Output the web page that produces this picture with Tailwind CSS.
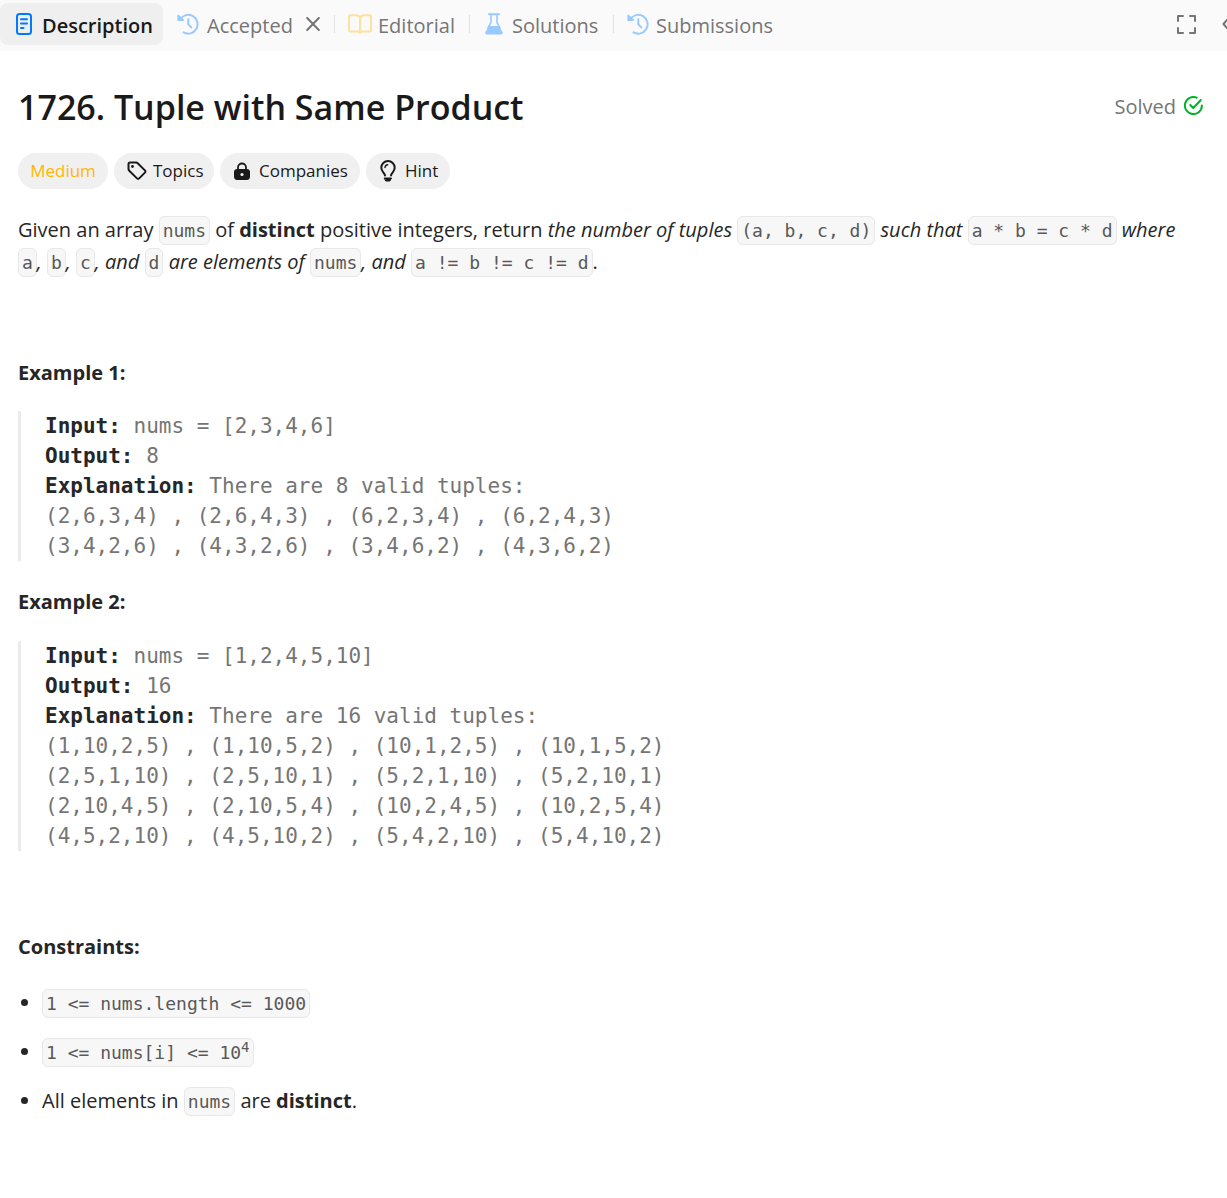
<!DOCTYPE html>
<html lang="en">
<head>
<meta charset="utf-8">
<meta name="viewport" content="width=device-width, initial-scale=1">
<title>1726. Tuple with Same Product</title>
<script src="https://cdn.jsdelivr.net/npm/@tailwindcss/browser@4"></script>
</head>
<body class="min-h-screen overflow-x-hidden bg-white font-['Open_Sans','Noto_Sans',sans-serif] text-[20px] text-[#262626]">
<header class="flex h-[51px] items-start justify-between overflow-hidden bg-[#fafafa] text-[#757575]">
  <nav aria-label="Problem tabs" class="flex h-[48px] shrink-0 items-center whitespace-nowrap [&_button>span]:pt-[3px]">
    <button type="button" class="flex h-[42px] w-[163px] items-center gap-[9px] rounded-lg bg-[#efefef] pl-[15px] font-semibold text-[#1a1a1a]">
      <svg class="h-[22px] w-[18px] shrink-0" viewBox="0 0 18 22" fill="none" stroke="#007aff" stroke-width="2" stroke-linecap="round" aria-hidden="true"><rect x="2" y="1" width="14" height="20" rx="2.5"/><path d="M6 6.3h6M6 10.6h6M6 15h2.5"/></svg>
      <span>Description</span>
    </button>
    <button type="button" class="ml-[14px] flex w-[117px] items-center gap-2">
      <svg class="size-[22px] shrink-0" viewBox="0 0 22 22" fill="none" stroke="#99caff" stroke-width="2" stroke-linecap="round" stroke-linejoin="round" aria-hidden="true"><path d="M3.200 6.300A9.400 9.400 0 1 1 6.500 19.400M11.300 6.200v5l3 3.200"/><path d="M1.200 2.400v4.800h5z" stroke-width="1.600" fill="#99caff"/></svg>
      <span>Accepted</span>
    </button>
    <button type="button" aria-label="Close Accepted" class="ml-[11px] flex size-4 items-center justify-center">
      <svg class="size-[14px]" viewBox="0 0 14 14" fill="none" stroke="#757575" stroke-width="2" stroke-linecap="round" aria-hidden="true"><path d="M1.2 1l11.6 12M12.8 1L1.2 13"/></svg>
    </button>
    <span class="ml-[13px] h-[18px] w-px bg-[#e2e2e2]"></span>
    <button type="button" class="ml-[13px] flex w-[106px] items-center gap-[6px]">
      <svg class="h-[20px] w-[24px] shrink-0" viewBox="0 0 24 20" fill="none" stroke="#ffe299" stroke-width="2" stroke-linejoin="round" aria-hidden="true"><path d="M12 3.2C10.8 1.8 9.600 1.200 8 1.200H2.500C1.500 1.200 1 1.700 1 2.500v13.700c0 .8.5 1.300 1.500 1.300H8.500c1.500 0 2.700.4 3.500 1.200.8-.8 2-1.200 3.500-1.200h6c1 0 1.500-.5 1.500-1.300V2.500c0-.8-.5-1.300-1.500-1.300H16c-1.600 0-2.800.6-4 2zM12 3.200v15"/></svg>
      <span>Editorial</span>
    </button>
    <span class="ml-[15px] h-[18px] w-px bg-[#e2e2e2]"></span>
    <button type="button" class="ml-[15px] flex w-[114px] items-center gap-[9px]">
      <svg class="h-[22px] w-[18px] shrink-0" viewBox="0 0 18 22" fill="none" stroke="#99caff" aria-hidden="true"><path d="M4 1.200h10" stroke-width="2" stroke-linecap="round"/><path d="M6 1.500v8L3 15h12l-3-5.500v-8" stroke-width="1.600"/><path d="M4.200 13h9.600l3.700 5.800c.8 1.300 0 2.700-1.500 2.700H2C.5 21.500-.3 20.100.5 18.800z" fill="#99caff" stroke="none"/></svg>
      <span>Solutions</span>
    </button>
    <span class="ml-[14px] h-[18px] w-px bg-[#e2e2e2]"></span>
    <button type="button" class="ml-[13px] flex items-center gap-[7px]">
      <svg class="size-[22px] shrink-0" viewBox="0 0 22 22" fill="none" stroke="#99caff" stroke-width="2" stroke-linecap="round" stroke-linejoin="round" aria-hidden="true"><path d="M3.200 6.300A9.400 9.400 0 1 1 6.500 19.400M11.300 6.200v5l3 3.200"/><path d="M1.200 2.400v4.800h5z" stroke-width="1.600" fill="#99caff"/></svg>
      <span>Submissions</span>
    </button>
  </nav>
  <div class="-mr-[10px] flex h-[48px] shrink-0 items-center gap-[26px]">
    <button type="button" aria-label="Full screen"><svg class="size-[19px]" viewBox="0 0 19 19" fill="none" stroke="#757575" stroke-width="2" stroke-linecap="round" stroke-linejoin="round" aria-hidden="true"><path d="M1 6V1h5M13 1h5v5M18 13v5h-5M6 18H1v-5"/></svg></button>
    <button type="button" aria-label="Collapse panel"><svg class="h-[12px] w-[15px]" viewBox="0 0 15 12" fill="none" stroke="#757575" stroke-width="2" stroke-linecap="round" stroke-linejoin="round" aria-hidden="true"><path d="M6 1L1.500 6 6 11"/></svg></button>
  </div>
</header>
<main class="px-[18px] pt-8 pb-16">
  <div class="flex items-center justify-between pr-[6px]">
    <h1 class="text-[34px] leading-[48px] font-semibold text-[#1a1a1a]">1726. Tuple with Same Product</h1>
    <div class="flex shrink-0 items-center gap-2 text-[#757575]">
      <span>Solved</span>
      <svg class="mb-[3px] size-[19px]" viewBox="0 0 19 19" fill="none" stroke="#01b328" stroke-width="2" stroke-linecap="round" stroke-linejoin="round" aria-hidden="true"><path d="M12.700 1.700A8.500 8.500 0 1 0 17.900 9.500M6.300 9l3 3L16.800 4"/></svg>
    </div>
  </div>
  <div class="mt-[22px] flex flex-wrap gap-[6px] text-[17px] text-[#1a1a1a]">
    <span class="flex h-9 w-[90px] items-center justify-center rounded-full bg-[#f0f0f0] text-[#ffb700]">Medium</span>
    <button type="button" class="flex h-9 w-[100px] items-center gap-[6px] rounded-full bg-[#f0f0f0] pl-[13px]">
      <svg class="size-[20px] shrink-0" viewBox="0 0 20 20" fill="none" stroke="#1a1a1a" stroke-width="2" stroke-linejoin="round" aria-hidden="true"><path d="M1.500 3.200c0-1 .6-1.600 1.600-1.600h6.200c.6 0 1 .2 1.400.6l7.200 7.200c.7.7.7 1.500 0 2.200l-5.700 5.800c-.7.7-1.500.7-2.200 0L2.500 10c-.6-.6-1-1.200-1-2z"/><circle cx="5.500" cy="5.500" r="1.400" fill="#1a1a1a" stroke="none"/></svg>
      <span>Topics</span>
    </button>
    <button type="button" class="flex h-9 w-[140px] items-center gap-2 rounded-full bg-[#f0f0f0] pl-[13px]">
      <svg class="h-[20px] w-[18px] shrink-0" viewBox="0 0 18 20" fill="none" aria-hidden="true"><path d="M5 9V6.500a4 4 0 0 1 8 0V9" stroke="#1a1a1a" stroke-width="1.800"/><path d="M4 8h10c2 0 3 1.400 3 3v4.500c0 2-1.200 3.500-3 3.500H4c-1.800 0-3-1.500-3-3.500V11c0-1.600 1-3 3-3z" fill="#1a1a1a"/><circle cx="9" cy="13.500" r="1.600" fill="#f0f0f0"/></svg>
      <span>Companies</span>
    </button>
    <button type="button" class="flex h-9 w-[84px] items-center gap-[9px] rounded-full bg-[#f0f0f0] pl-[14px]">
      <svg class="h-[22px] w-[16px] shrink-0" viewBox="0 0 16 22" fill="none" stroke="#1a1a1a" stroke-width="2" stroke-linecap="round" stroke-linejoin="round" aria-hidden="true"><path d="M5 15.500c0-2-3.700-4-3.700-7.800a6.700 6.700 0 0 1 13.400 0c0 3.800-3.700 5.800-3.700 7.800"/><path d="M5 7.500a3 3 0 0 1 2.700-2.700" stroke-width="1.400"/><path d="M4.500 18h7l-1.600 3H6.100z" fill="#1a1a1a" stroke-width="1"/></svg>
      <span>Hint</span>
    </button>
  </div>
  <article class="mt-[25px] leading-8 [&_code]:rounded-[6px] [&_code]:border [&_code]:border-[#e8e8e8] [&_code]:bg-[#f7f7f7] [&_code]:px-[3px] [&_code]:pt-[3px] [&_code]:pb-[3px] [&_code]:font-['DejaVu_Sans_Mono',monospace] [&_code]:text-[18px] [&_code]:leading-none [&_code]:whitespace-nowrap [&_code]:text-[#595959] [&_code]:not-italic">
    <p class="pr-4">Given an array <code>nums</code> of <strong>distinct</strong> positive integers, return <em>the number of tuples </em><code>(a, b, c, d)</code><em> such that </em><code>a * b = c * d</code><em> where </em><code>a</code><em>, </em><code>b</code><em>, </em><code>c</code><em>, and </em><code>d</code><em> are elements of </em><code>nums</code><em>, and </em><code>a != b != c != d</code>.</p>
    <p class="mt-6">&nbsp;</p>
    <p class="mt-[23px]"><strong>Example 1:</strong></p>
    <pre class="mt-[22px] overflow-x-auto border-l-[3px] border-[#ebebeb] pl-6 font-['DejaVu_Sans_Mono',monospace] text-[21px] leading-[30px] text-[#757575]"><strong class="text-[#262626]">Input:</strong> nums = [2,3,4,6]
<strong class="text-[#262626]">Output:</strong> 8
<strong class="text-[#262626]">Explanation:</strong> There are 8 valid tuples:
(2,6,3,4) , (2,6,4,3) , (6,2,3,4) , (6,2,4,3)
(3,4,2,6) , (4,3,2,6) , (3,4,6,2) , (4,3,6,2)</pre>
    <p class="mt-[25px]"><strong>Example 2:</strong></p>
    <pre class="mt-[23px] overflow-x-auto border-l-[3px] border-[#ebebeb] pl-6 font-['DejaVu_Sans_Mono',monospace] text-[21px] leading-[30px] text-[#757575]"><strong class="text-[#262626]">Input:</strong> nums = [1,2,4,5,10]
<strong class="text-[#262626]">Output:</strong> 16
<strong class="text-[#262626]">Explanation:</strong> There are 16 valid tuples:
(1,10,2,5) , (1,10,5,2) , (10,1,2,5) , (10,1,5,2)
(2,5,1,10) , (2,5,10,1) , (5,2,1,10) , (5,2,10,1)
(2,10,4,5) , (2,10,5,4) , (10,2,4,5) , (10,2,5,4)
(4,5,2,10) , (4,5,10,2) , (5,4,2,10) , (5,4,10,2)</pre>
    <p class="mt-6">&nbsp;</p>
    <p class="mt-6"><strong>Constraints:</strong></p>
    <ul class="mt-6 flex list-disc flex-col gap-[17px] pl-6">
      <li><code>1 &lt;= nums.length &lt;= 1000</code></li>
      <li><code>1 &lt;= nums[i] &lt;= 10<sup class="text-[14px]">4</sup></code></li>
      <li>All elements in <code>nums</code> are <strong>distinct</strong>.</li>
    </ul>
  </article>
</main>
</body>
</html>
